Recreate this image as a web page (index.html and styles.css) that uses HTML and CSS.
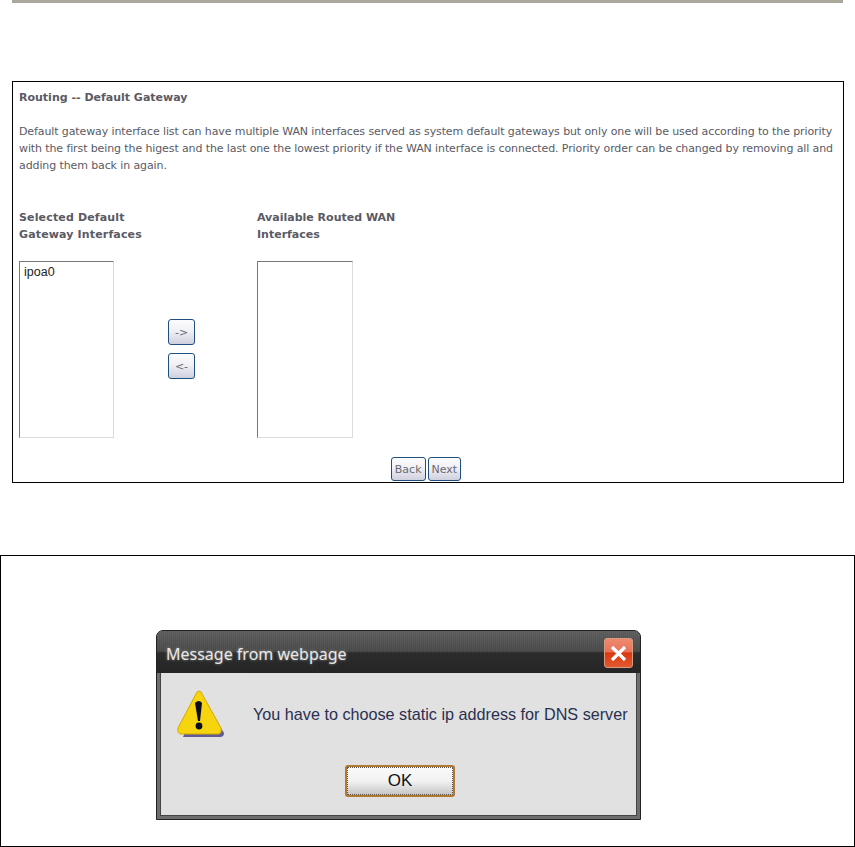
FILE: index.html
```html
<!DOCTYPE html>
<html>
  <head>
    <title>Routing -- Default Gateway</title>
    <link rel="stylesheet" href="styles.css">
  </head>

<body>
  <div class="top-rule"></div>

  <div class="panel">
    <p class="head-t">Routing -- Default Gateway</p>
    <p class="intro">Default gateway interface list can have multiple WAN interfaces served as system default gateways but only one will be used according to the priority<br>with the first being the higest and the last one the lowest priority if the WAN interface is connected. Priority order can be changed by removing all and<br>adding them back in again.</p>

    <div class="lists">
      <div class="list-col">
        <p class="list-title list-title-wide">Selected Default<br>Gateway Interfaces</p>
        <div class="list-box list-box-left">ipoa0</div>
      </div>
      <div class="move-col">
        <button class="web-button move-button">-&gt;</button>
        <button class="web-button move-button">&lt;-</button>
      </div>
      <div class="list-col">
        <p class="list-title">Available Routed WAN<br>Interfaces</p>
        <div class="list-box"></div>
      </div>
    </div>

    <div class="nav-row">
      <button class="web-button nav-button">Back</button>
      <button class="web-button nav-button">Next</button>
    </div>
  </div>

  <div class="panel-msg">
    <div class="dialog">
      <div class="dialog-title">
        <span class="dialog-title-text">Message from webpage</span>
        <div class="close-button">
          <svg width="19" height="17" viewBox="0 0 19 17">
            <path d="M3 2 L16 15 M16 2 L3 15" stroke="#fff" stroke-width="3.2" fill="none"/>
          </svg>
        </div>
      </div>
      <div class="dialog-body">
        <div class="dialog-row">
          <svg class="warn-icon" width="48" height="48" viewBox="0 0 48 48">
            <path d="M25 6 L47 43 Q47 47 43 47 L6 47 Z" fill="#34307a" opacity="0.75"/>
            <path d="M20 2 Q22 0 24 2 L44 38 Q45 44 41 44 L4 44 Q0 44 1 38 Z" fill="#f6d40e" stroke="#d8a800" stroke-width="1"/>
            <path d="M18 13 Q22 9 25 13 L23 31 L21 31 Z" fill="#0b0b1e"/>
            <circle cx="22" cy="36" r="3.4" fill="#0b0b1e"/>
          </svg>
          <p class="dialog-msg">You have to choose static ip address for DNS server</p>
        </div>
        <button class="ok-button">OK</button>
      </div>
    </div>
  </div>
</body>
</html>
```

FILE: styles.css
```css
body {
  margin: 0;
  background-color: #fff;
  font-family: "DejaVu Sans", sans-serif;
}

p {
  margin: 0;
}

.top-rule {
  height: 3px;
  margin: 0 12px;
  background-color: #aaa89c;
}

.panel {
  box-sizing: border-box;
  width: 832px;
  height: 402px;
  margin: 78px 0 0 12px;
  padding: 7px 6px 0 6px;
  border: 1px solid #000;
  font-size: 11px;
  line-height: 17px;
  color: #5a5a64;
}

.head-t {
  font-weight: bold;
}

.intro {
  margin-top: 17px;
  white-space: nowrap;
  letter-spacing: -0.11px;
}

.lists {
  display: flex;
  margin-top: 35px;
}

.list-col {
  width: 96px;
}

.list-title {
  font-weight: bold;
  white-space: nowrap;
}

.list-title-wide {
  letter-spacing: 0.15px;
}

.list-box {
  box-sizing: border-box;
  width: 96px;
  height: 177px;
  margin-top: 18px;
  padding: 3px 4px;
  border: 1px solid #d8dce0;
  border-top-color: #777;
  border-left-color: #777;
  font-family: "Liberation Sans", sans-serif;
  font-size: 12.5px;
  line-height: 15px;
  color: #222;
}

.list-box-left {
  width: 95px;
}

.move-col {
  display: flex;
  flex-direction: column;
  align-items: flex-start;
  gap: 8px;
  width: 143px;
  padding: 110px 0 0 54px;
  box-sizing: border-box;
  margin-left: -1px;
}

.web-button {
  padding: 0;
  border: 1px solid #1f4f7f;
  border-radius: 3px;
  background: linear-gradient(#fcfcfe, #f0f0f6 45%, #cfd0de);
  font-family: "DejaVu Sans", sans-serif;
  font-size: 11px;
  color: #6a6a72;
}

.move-button {
  width: 27px;
  height: 26px;
}

.nav-row {
  display: flex;
  justify-content: center;
  gap: 2px;
  margin-top: 19px;
  padding-right: 4px;
}

.nav-button {
  height: 24px;
  padding: 0 3px;
}

.panel-msg {
  box-sizing: border-box;
  height: 292px;
  margin-top: 72px;
  padding: 74px 0 0 155px;
  border: 1px solid #000;
}

.dialog {
  box-sizing: border-box;
  width: 485px;
  height: 190px;
  padding: 0 3px 3px 3px;
  border: 1px solid #222;
  border-radius: 7px 7px 0 0;
  background-color: #6e6e6e;
}

.dialog-title {
  display: flex;
  justify-content: space-between;
  align-items: flex-start;
  height: 42px;
  margin: 0 -3px;
  padding: 7px 7px 0 9px;
  box-sizing: border-box;
  border-radius: 6px 6px 0 0;
  background:
    repeating-linear-gradient(90deg, rgba(0, 0, 0, 0.07) 0 1px, transparent 1px 2px),
    linear-gradient(#626262, #4e4e4e 48%, #2e2e2e 52%, #262626);
  font-family: "Noto Sans", sans-serif;
  font-size: 16px;
  color: #e8e8e8;
}

.dialog-title-text {
  margin-top: 5px;
  text-shadow: 0 0 3px #999;
}

.close-button {
  display: flex;
  align-items: center;
  justify-content: center;
  width: 29px;
  height: 30px;
  box-sizing: border-box;
  border: 1px solid #d89a80;
  border-radius: 3px;
  background: linear-gradient(#ee8a6e, #e8735a 45%, #d8380f 50%, #e25a30);
}

.dialog-body {
  display: flex;
  flex-direction: column;
  align-items: center;
  box-sizing: border-box;
  height: 143px;
  border: 1px solid #444;
  border-top: 0;
  background-color: #e1e1e1;
}

.dialog-row {
  display: flex;
  align-items: center;
  width: 100%;
  padding: 17px 0 0 16px;
  box-sizing: border-box;
}

.warn-icon {
  flex: none;
}

.dialog-msg {
  margin: 0 0 0 28px;
  font-family: "Liberation Sans", sans-serif;
  font-size: 16.2px;
  color: #2a3050;
  white-space: nowrap;
}

.ok-button {
  width: 110px;
  height: 32px;
  margin: 27px 0 0 3px;
  border: 2px solid #b07830;
  border-radius: 3px;
  outline: 1px dotted #555;
  outline-offset: -3px;
  background: linear-gradient(#fafafa, #f2f2f2 50%, #c4c4c4);
  font-family: "Liberation Sans", sans-serif;
  font-size: 17px;
  color: #111;
}
```
